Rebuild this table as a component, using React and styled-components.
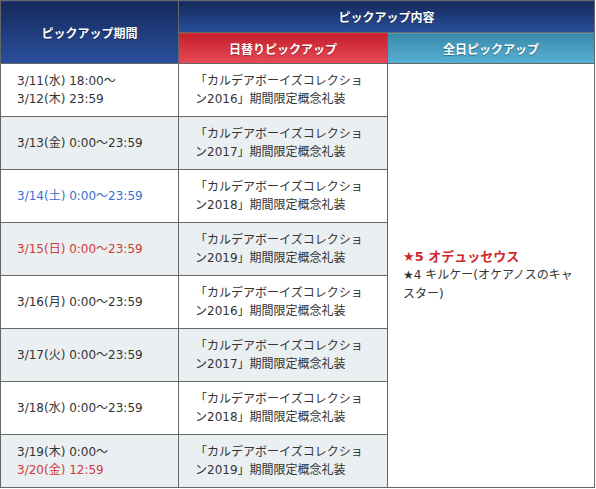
import React from "react";
import styled, { createGlobalStyle } from "styled-components";

const GlobalStyle = createGlobalStyle`
  html, body {
    margin: 0;
    padding: 0;
    background: #ffffff;
  }
  body {
    font-family: "DejaVu Sans", "Noto Sans CJK JP", sans-serif;
    color: #333333;
  }
`;

const Wrapper = styled.div`
  width: 596px;
`;

const Table = styled.table`
  border-collapse: collapse;
  width: 595px;
  table-layout: fixed;
  font-size: 12px;
  border: 1px solid #666666;
`;

const HeadCell = styled.th`
  border: 1px solid #666666;
  color: #ffffff;
  font-family: "Noto Sans CJK JP", sans-serif;
  font-weight: bold;
  font-size: 12px;
  text-align: center;
  padding: 0;
  height: ${(p) => p.$height || 30}px;
  background: ${(p) =>
    p.$tone === "red"
      ? "linear-gradient(180deg, #c41e2a 0%, #e84a58 100%)"
      : p.$tone === "sky"
      ? "linear-gradient(180deg, #3a8aa6 0%, #58b0d8 100%)"
      : "linear-gradient(180deg, #15295a 0%, #2a4f9e 100%)"};
  text-shadow: 0 1px 1px rgba(0, 0, 0, 0.35);
`;

const Row = styled.tr`
  background: ${(p) => (p.$alt ? "#eaeff2" : "#ffffff")};
`;

const DateCell = styled.td`
  border: 1px solid #666666;
  height: 52px;
  padding: 0 0 0 16px;
  line-height: 18px;
  vertical-align: middle;
`;

const DateLine = styled.div`
  color: ${(p) =>
    p.$tone === "blue" ? "#3a6fcf" : p.$tone === "red" ? "#d03a3a" : "#333333"};
`;

const ItemCell = styled.td`
  border: 1px solid #666666;
  padding: 0 20px 0 16px;
  line-height: 18px;
  vertical-align: middle;
`;

const AllDayCell = styled.td`
  border: 1px solid #666666;
  background: #ffffff;
  padding: 0 14px 0 15px;
  vertical-align: middle;
  line-height: 19px;
`;

const Star5 = styled.div`
  color: #d0282e;
  font-weight: bold;
  font-size: 13px;
`;

const Star4 = styled.div`
  color: #333333;
`;

const rows = [
  { lines: [["3/11(水) 18:00～"], ["3/12(木) 23:59"]], year: 2016 },
  { lines: [["3/13(金) 0:00～23:59"]], year: 2017 },
  { lines: [["3/14(土) 0:00～23:59", "blue"]], year: 2018 },
  { lines: [["3/15(日) 0:00～23:59", "red"]], year: 2019 },
  { lines: [["3/16(月) 0:00～23:59"]], year: 2016 },
  { lines: [["3/17(火) 0:00～23:59"]], year: 2017 },
  { lines: [["3/18(水) 0:00～23:59"]], year: 2018 },
  { lines: [["3/19(木) 0:00～"], ["3/20(金) 12:59", "red"]], year: 2019 },
];

export default function App() {
  return (
    <Wrapper>
      <GlobalStyle />
      <Table>
        <colgroup>
          <col style={{ width: 178 }} />
          <col style={{ width: 209 }} />
          <col />
        </colgroup>
        <thead>
          <tr>
            <HeadCell rowSpan={2}>ピックアップ期間</HeadCell>
            <HeadCell colSpan={2} $height={31}>
              ピックアップ内容
            </HeadCell>
          </tr>
          <tr>
            <HeadCell $tone="red" $height={30}>
              日替りピックアップ
            </HeadCell>
            <HeadCell $tone="sky" $height={30}>
              全日ピックアップ
            </HeadCell>
          </tr>
        </thead>
        <tbody>
          {rows.map((r, i) => (
            <Row key={i} $alt={i % 2 === 1}>
              <DateCell>
                {r.lines.map(([text, tone], j) => (
                  <DateLine key={j} $tone={tone}>
                    {text}
                  </DateLine>
                ))}
              </DateCell>
              <ItemCell>
                「カルデアボーイズコレクション{r.year}」期間限定概念礼装
              </ItemCell>
              {i === 0 && (
                <AllDayCell rowSpan={8}>
                  <Star5>★5 オデュッセウス</Star5>
                  <Star4>★4 キルケー(オケアノスのキャスター)</Star4>
                </AllDayCell>
              )}
            </Row>
          ))}
        </tbody>
      </Table>
    </Wrapper>
  );
}
